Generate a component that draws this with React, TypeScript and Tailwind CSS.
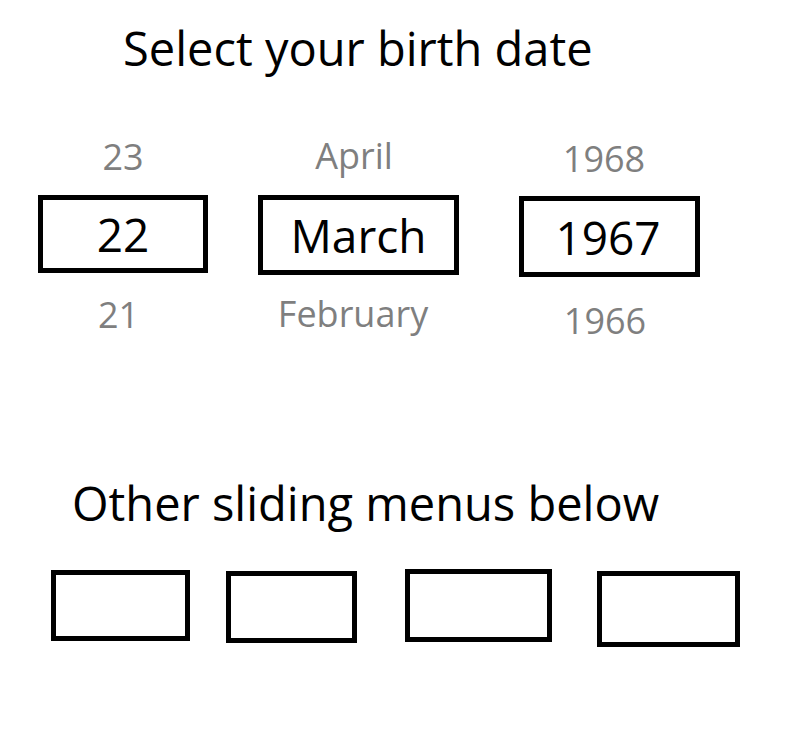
import React from "react";

const font = { fontFamily: '"Open Sans", "Noto Sans", sans-serif' };

export default function App() {
  return (
    <div className="min-h-screen w-full bg-white text-black" style={font}>
      <div className="flex flex-col pt-[25px]">
        <h1 className="ml-[123px] text-[47px] leading-none font-normal">Select your birth date</h1>

        <div className="mt-[66px] ml-[38px] flex items-start">
          {/* Day column */}
          <div className="mt-px flex w-[170px] flex-col">
            <div className="text-center text-[36px] leading-none text-[#7f7f7f]">23</div>
            <div className="mt-[20px] flex h-[78px] items-center justify-center border-[5px] border-black text-[46px] leading-none">
              22
            </div>
            <div className="mt-[24px] pr-[9px] text-center text-[36px] leading-none text-[#7f7f7f]">21</div>
          </div>

          {/* Month column */}
          <div className="ml-[50px] flex w-[201px] flex-col">
            <div className="pr-[9px] text-center text-[36px] leading-none text-[#7f7f7f]">April</div>
            <div className="mt-[21px] flex h-[80px] items-center justify-center border-[5px] border-black text-[46px] leading-none">
              March
            </div>
            <div className="mt-[21px] pr-[11px] text-center text-[36px] leading-none text-[#7f7f7f]">February</div>
          </div>

          {/* Year column */}
          <div className="ml-[60px] mt-[3px] flex w-[181px] flex-col">
            <div className="pr-[11px] text-center text-[36px] leading-none text-[#7f7f7f]">1968</div>
            <div className="mt-[19px] flex h-[81px] items-center justify-center border-[5px] border-black pr-[3px] text-[46px] leading-none">
              1967
            </div>
            <div className="mt-[26px] pr-[9px] text-center text-[36px] leading-none text-[#7f7f7f]">1966</div>
          </div>
        </div>

        <h2 className="mt-[141px] ml-[72px] text-[47px] leading-none font-normal">Other sliding menus below</h2>

        <div className="mt-[42px] flex items-start">
          <div className="ml-[51px] mt-px h-[71px] w-[139px] border-[5px] border-black" />
          <div className="ml-[36px] mt-[2px] h-[72px] w-[131px] border-[5px] border-black" />
          <div className="ml-[48px] h-[73px] w-[147px] border-[5px] border-black" />
          <div className="ml-[45px] mt-[2px] h-[76px] w-[143px] border-[5px] border-black" />
        </div>
      </div>
    </div>
  );
}
